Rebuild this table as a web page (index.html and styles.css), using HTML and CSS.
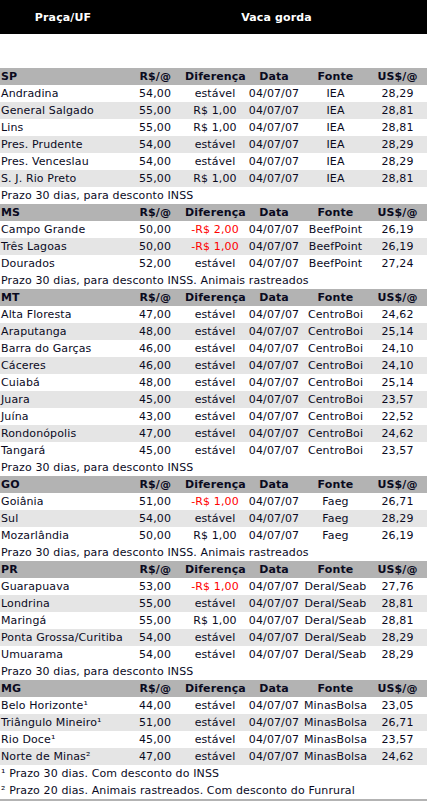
FILE: index.html
```html
<!DOCTYPE html>
<html lang="pt">
<head>
<meta charset="utf-8">
<title>Vaca gorda</title>
<link rel="stylesheet" href="styles.css">
</head>
<body>
<table class="top">
  <tr><th class="t1">Praça/UF</th><th class="t2">Vaca gorda</th></tr>
</table>
<div class="gap"></div>
<table class="prices">
  <colgroup>
    <col class="c1"><col class="c2"><col class="c3"><col class="c4"><col class="c5"><col class="c6">
  </colgroup>
  <tbody>
    <tr class="head"><td class="name">SP</td><td class="num">R$/@</td><td>Diferença</td><td>Data</td><td>Fonte</td><td>US$/@</td></tr>
    <tr class="row"><td class="name">Andradina</td><td class="num">54,00</td><td>estável</td><td>04/07/07</td><td>IEA</td><td>28,29</td></tr>
    <tr class="row"><td class="name">General Salgado</td><td class="num">55,00</td><td>R$ 1,00</td><td>04/07/07</td><td>IEA</td><td>28,81</td></tr>
    <tr class="row"><td class="name">Lins</td><td class="num">55,00</td><td>R$ 1,00</td><td>04/07/07</td><td>IEA</td><td>28,81</td></tr>
    <tr class="row"><td class="name">Pres. Prudente</td><td class="num">54,00</td><td>estável</td><td>04/07/07</td><td>IEA</td><td>28,29</td></tr>
    <tr class="row"><td class="name">Pres. Venceslau</td><td class="num">54,00</td><td>estável</td><td>04/07/07</td><td>IEA</td><td>28,29</td></tr>
    <tr class="row"><td class="name">S. J. Rio Preto</td><td class="num">55,00</td><td>R$ 1,00</td><td>04/07/07</td><td>IEA</td><td>28,81</td></tr>
    <tr class="note"><td colspan="6">Prazo 30 dias, para desconto INSS</td></tr>
  </tbody>
  <tbody>
    <tr class="head"><td class="name">MS</td><td class="num">R$/@</td><td>Diferença</td><td>Data</td><td>Fonte</td><td>US$/@</td></tr>
    <tr class="row"><td class="name">Campo Grande</td><td class="num">50,00</td><td class="neg">-R$ 2,00</td><td>04/07/07</td><td>BeefPoint</td><td>26,19</td></tr>
    <tr class="row"><td class="name">Três Lagoas</td><td class="num">50,00</td><td class="neg">-R$ 1,00</td><td>04/07/07</td><td>BeefPoint</td><td>26,19</td></tr>
    <tr class="row"><td class="name">Dourados</td><td class="num">52,00</td><td>estável</td><td>04/07/07</td><td>BeefPoint</td><td>27,24</td></tr>
    <tr class="note"><td colspan="6">Prazo 30 dias, para desconto INSS. Animais rastreados</td></tr>
  </tbody>
  <tbody>
    <tr class="head"><td class="name">MT</td><td class="num">R$/@</td><td>Diferença</td><td>Data</td><td>Fonte</td><td>US$/@</td></tr>
    <tr class="row"><td class="name">Alta Floresta</td><td class="num">47,00</td><td>estável</td><td>04/07/07</td><td>CentroBoi</td><td>24,62</td></tr>
    <tr class="row"><td class="name">Araputanga</td><td class="num">48,00</td><td>estável</td><td>04/07/07</td><td>CentroBoi</td><td>25,14</td></tr>
    <tr class="row"><td class="name">Barra do Garças</td><td class="num">46,00</td><td>estável</td><td>04/07/07</td><td>CentroBoi</td><td>24,10</td></tr>
    <tr class="row"><td class="name">Cáceres</td><td class="num">46,00</td><td>estável</td><td>04/07/07</td><td>CentroBoi</td><td>24,10</td></tr>
    <tr class="row"><td class="name">Cuiabá</td><td class="num">48,00</td><td>estável</td><td>04/07/07</td><td>CentroBoi</td><td>25,14</td></tr>
    <tr class="row"><td class="name">Juara</td><td class="num">45,00</td><td>estável</td><td>04/07/07</td><td>CentroBoi</td><td>23,57</td></tr>
    <tr class="row"><td class="name">Juína</td><td class="num">43,00</td><td>estável</td><td>04/07/07</td><td>CentroBoi</td><td>22,52</td></tr>
    <tr class="row"><td class="name">Rondonópolis</td><td class="num">47,00</td><td>estável</td><td>04/07/07</td><td>CentroBoi</td><td>24,62</td></tr>
    <tr class="row"><td class="name">Tangará</td><td class="num">45,00</td><td>estável</td><td>04/07/07</td><td>CentroBoi</td><td>23,57</td></tr>
    <tr class="note"><td colspan="6">Prazo 30 dias, para desconto INSS</td></tr>
  </tbody>
  <tbody>
    <tr class="head"><td class="name">GO</td><td class="num">R$/@</td><td>Diferença</td><td>Data</td><td>Fonte</td><td>US$/@</td></tr>
    <tr class="row"><td class="name">Goiânia</td><td class="num">51,00</td><td class="neg">-R$ 1,00</td><td>04/07/07</td><td>Faeg</td><td>26,71</td></tr>
    <tr class="row"><td class="name">Sul</td><td class="num">54,00</td><td>estável</td><td>04/07/07</td><td>Faeg</td><td>28,29</td></tr>
    <tr class="row"><td class="name">Mozarlândia</td><td class="num">50,00</td><td>R$ 1,00</td><td>04/07/07</td><td>Faeg</td><td>26,19</td></tr>
    <tr class="note"><td colspan="6">Prazo 30 dias, para desconto INSS. Animais rastreados</td></tr>
  </tbody>
  <tbody>
    <tr class="head"><td class="name">PR</td><td class="num">R$/@</td><td>Diferença</td><td>Data</td><td>Fonte</td><td>US$/@</td></tr>
    <tr class="row"><td class="name">Guarapuava</td><td class="num">53,00</td><td class="neg">-R$ 1,00</td><td>04/07/07</td><td>Deral/Seab</td><td>27,76</td></tr>
    <tr class="row"><td class="name">Londrina</td><td class="num">55,00</td><td>estável</td><td>04/07/07</td><td>Deral/Seab</td><td>28,81</td></tr>
    <tr class="row"><td class="name">Maringá</td><td class="num">55,00</td><td>R$ 1,00</td><td>04/07/07</td><td>Deral/Seab</td><td>28,81</td></tr>
    <tr class="row"><td class="name">Ponta Grossa/Curitiba</td><td class="num">54,00</td><td>estável</td><td>04/07/07</td><td>Deral/Seab</td><td>28,29</td></tr>
    <tr class="row"><td class="name">Umuarama</td><td class="num">54,00</td><td>estável</td><td>04/07/07</td><td>Deral/Seab</td><td>28,29</td></tr>
    <tr class="note"><td colspan="6">Prazo 30 dias, para desconto INSS</td></tr>
  </tbody>
  <tbody>
    <tr class="head"><td class="name">MG</td><td class="num">R$/@</td><td>Diferença</td><td>Data</td><td>Fonte</td><td>US$/@</td></tr>
    <tr class="row"><td class="name">Belo Horizonte¹</td><td class="num">44,00</td><td>estável</td><td>04/07/07</td><td>MinasBolsa</td><td>23,05</td></tr>
    <tr class="row"><td class="name">Triângulo Mineiro¹</td><td class="num">51,00</td><td>estável</td><td>04/07/07</td><td>MinasBolsa</td><td>26,71</td></tr>
    <tr class="row"><td class="name">Rio Doce¹</td><td class="num">45,00</td><td>estável</td><td>04/07/07</td><td>MinasBolsa</td><td>23,57</td></tr>
    <tr class="row"><td class="name">Norte de Minas²</td><td class="num">47,00</td><td>estável</td><td>04/07/07</td><td>MinasBolsa</td><td>24,62</td></tr>
    <tr class="note"><td colspan="6">¹ Prazo 30 dias. Com desconto do INSS</td></tr>
    <tr class="note"><td colspan="6">² Prazo 20 dias. Animais rastreados. Com desconto do Funrural</td></tr>
  </tbody>
</table>
<div class="end"></div>
</body>
</html>
```
FILE: styles.css
```css
html, body {
  margin: 0;
  padding: 0;
  background: #ffffff;
}
body {
  font-family: "DejaVu Sans", Verdana, sans-serif;
  font-size: 11px;
  letter-spacing: 0.12px;
  color: #0a0a1e;
  width: 427px;
}
.top {
  width: 427px;
  border-collapse: collapse;
  table-layout: fixed;
  background: #000000;
}
.top th {
  height: 34px;
  padding: 0;
  color: #ffffff;
  font-weight: bold;
  text-align: center;
}
.top .t1 { width: 126px; }
.gap { height: 34px; }
.prices {
  width: 427px;
  border-collapse: collapse;
  table-layout: fixed;
}
.c1 { width: 130px; }
.c2 { width: 55px; }
.c3 { width: 60px; }
.c4 { width: 58px; }
.c5 { width: 65px; }
.c6 { width: 59px; }
.prices td {
  height: 17px;
  padding: 0;
  text-align: center;
  white-space: nowrap;
  line-height: 17px;
}
.prices td.name {
  text-align: left;
  padding-left: 1px;
}
.prices td.num {
  text-align: right;
  padding-right: 14px;
}
.head td {
  background: #b3b3b3;
  font-weight: bold;
}
.row td { background: #ffffff; }
.row:nth-child(odd) td { background: #e5e5e5; }
.note td {
  text-align: left;
  padding-left: 1px;
  background: #ffffff;
}
.prices td.neg { color: #ff0000; }
.end {
  height: 4px;
  background: #b3b3b3;
}
```
